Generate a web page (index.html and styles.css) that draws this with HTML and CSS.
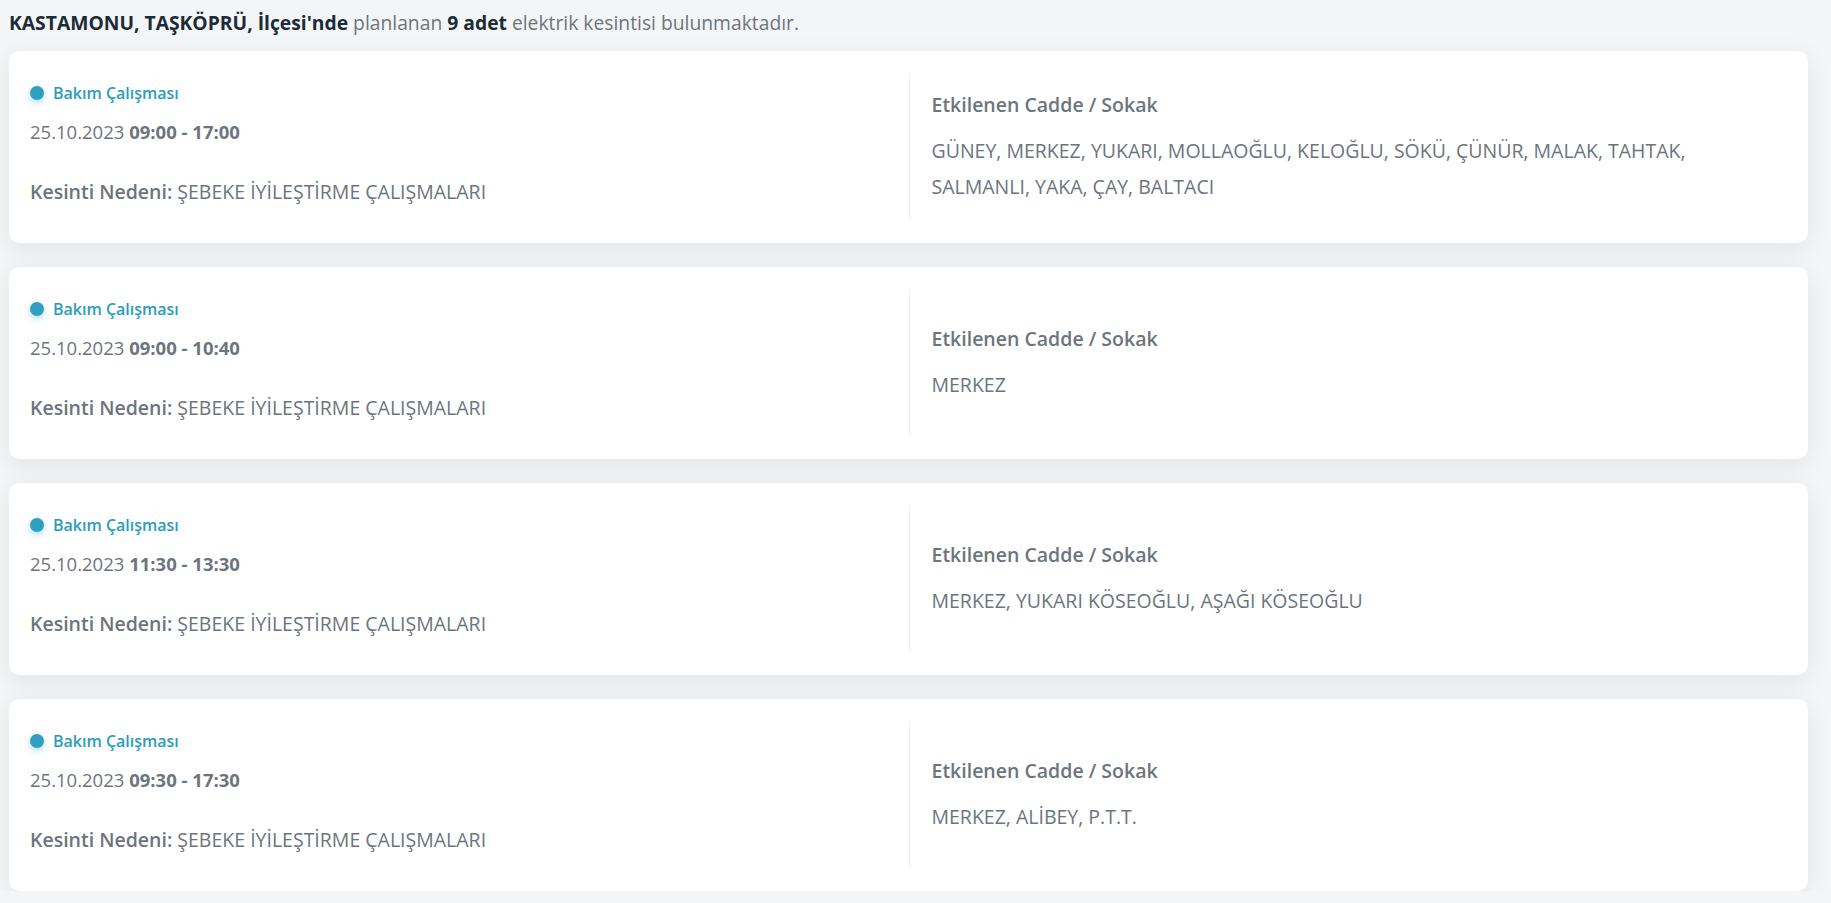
FILE: index.html
```html
<!DOCTYPE html>
<html lang="tr">
<head>
    <meta charset="UTF-8">
    <meta name="viewport" content="width=device-width, initial-scale=1.0">
    <title>Planlı Elektrik Kesintileri</title>
    <link rel="stylesheet" href="styles.css">
</head>
<body>
    <div class="page">
        <p class="summary"><strong>KASTAMONU, TAŞKÖPRÜ, İlçesi'nde</strong> planlanan <strong>9 adet</strong> elektrik kesintisi bulunmaktadır.</p>

        <div class="outage-list">
            <div class="outage-card">
                <div class="outage-info">
                    <div class="outage-type"><span class="dot"></span>Bakım Çalışması</div>
                    <div class="outage-time">25.10.2023 <strong>09:00 - 17:00</strong></div>
                    <div class="outage-reason"><strong>Kesinti Nedeni:</strong> ŞEBEKE İYİLEŞTİRME ÇALIŞMALARI</div>
                </div>
                <div class="outage-streets">
                    <h3>Etkilenen Cadde / Sokak</h3>
                    <p>GÜNEY, MERKEZ, YUKARI, MOLLAOĞLU, KELOĞLU, SÖKÜ, ÇÜNÜR, MALAK, TAHTAK, SALMANLI, YAKA, ÇAY, BALTACI</p>
                </div>
            </div>

            <div class="outage-card">
                <div class="outage-info">
                    <div class="outage-type"><span class="dot"></span>Bakım Çalışması</div>
                    <div class="outage-time">25.10.2023 <strong>09:00 - 10:40</strong></div>
                    <div class="outage-reason"><strong>Kesinti Nedeni:</strong> ŞEBEKE İYİLEŞTİRME ÇALIŞMALARI</div>
                </div>
                <div class="outage-streets">
                    <h3>Etkilenen Cadde / Sokak</h3>
                    <p>MERKEZ</p>
                </div>
            </div>

            <div class="outage-card">
                <div class="outage-info">
                    <div class="outage-type"><span class="dot"></span>Bakım Çalışması</div>
                    <div class="outage-time">25.10.2023 <strong>11:30 - 13:30</strong></div>
                    <div class="outage-reason"><strong>Kesinti Nedeni:</strong> ŞEBEKE İYİLEŞTİRME ÇALIŞMALARI</div>
                </div>
                <div class="outage-streets">
                    <h3>Etkilenen Cadde / Sokak</h3>
                    <p>MERKEZ, YUKARI KÖSEOĞLU, AŞAĞI KÖSEOĞLU</p>
                </div>
            </div>

            <div class="outage-card">
                <div class="outage-info">
                    <div class="outage-type"><span class="dot"></span>Bakım Çalışması</div>
                    <div class="outage-time">25.10.2023 <strong>09:30 - 17:30</strong></div>
                    <div class="outage-reason"><strong>Kesinti Nedeni:</strong> ŞEBEKE İYİLEŞTİRME ÇALIŞMALARI</div>
                </div>
                <div class="outage-streets">
                    <h3>Etkilenen Cadde / Sokak</h3>
                    <p>MERKEZ, ALİBEY, P.T.T.</p>
                </div>
            </div>
        </div>
    </div>
</body>
</html>
```

FILE: styles.css
```css
body {
    margin: 0;
    font-family: "Open Sans", "Noto Sans", sans-serif;
    background-color: #f4f5f7;
    color: #6c757d;
}
.page {
    padding: 8px 23px 0 9px;
}
.summary {
    margin: 0;
    font-size: 19.3px;
    line-height: 30px;
    color: #6c757d;
}
.summary strong {
    color: #1c2b39;
    font-weight: 700;
}
.outage-list {
    margin-top: 13px;
    display: flex;
    flex-direction: column;
    gap: 24px;
}
.outage-card {
    background-color: #fff;
    border-radius: 10px;
    box-shadow: 0 6px 26px rgba(0, 0, 0, 0.075);
    padding: 23px 18px;
    display: grid;
    grid-template-columns: 1fr 1fr;
    min-height: 146px;
}
.outage-info {
    display: flex;
    flex-direction: column;
    padding-left: 3px;
}
.outage-type {
    margin-top: 8px;
    display: flex;
    align-items: center;
    gap: 9px;
    font-size: 16px;
    line-height: 22px;
    font-weight: 600;
    color: #2b9cbd;
}
.dot {
    width: 14px;
    height: 14px;
    border-radius: 50%;
    background-color: #2f9fc1;
    box-shadow: 0 3px 6px rgba(47, 159, 193, 0.35);
}
.outage-time {
    margin-top: 15px;
    font-size: 18.5px;
    line-height: 26px;
}
.outage-time strong {
    font-weight: 700;
}
.outage-reason {
    margin-top: 34px;
    font-size: 19.5px;
    line-height: 26px;
}
.outage-reason strong {
    font-weight: 600;
}
.outage-streets {
    border-left: 1px solid #eeeff1;
    padding: 3px 0 0 22px;
    display: flex;
    flex-direction: column;
    justify-content: center;
}
.outage-streets h3 {
    margin: 0;
    font-size: 19.5px;
    line-height: 26px;
    font-weight: 600;
}
.outage-streets p {
    margin: 15px 0 0;
    max-width: 800px;
    font-size: 19.5px;
    line-height: 36px;
}
```
